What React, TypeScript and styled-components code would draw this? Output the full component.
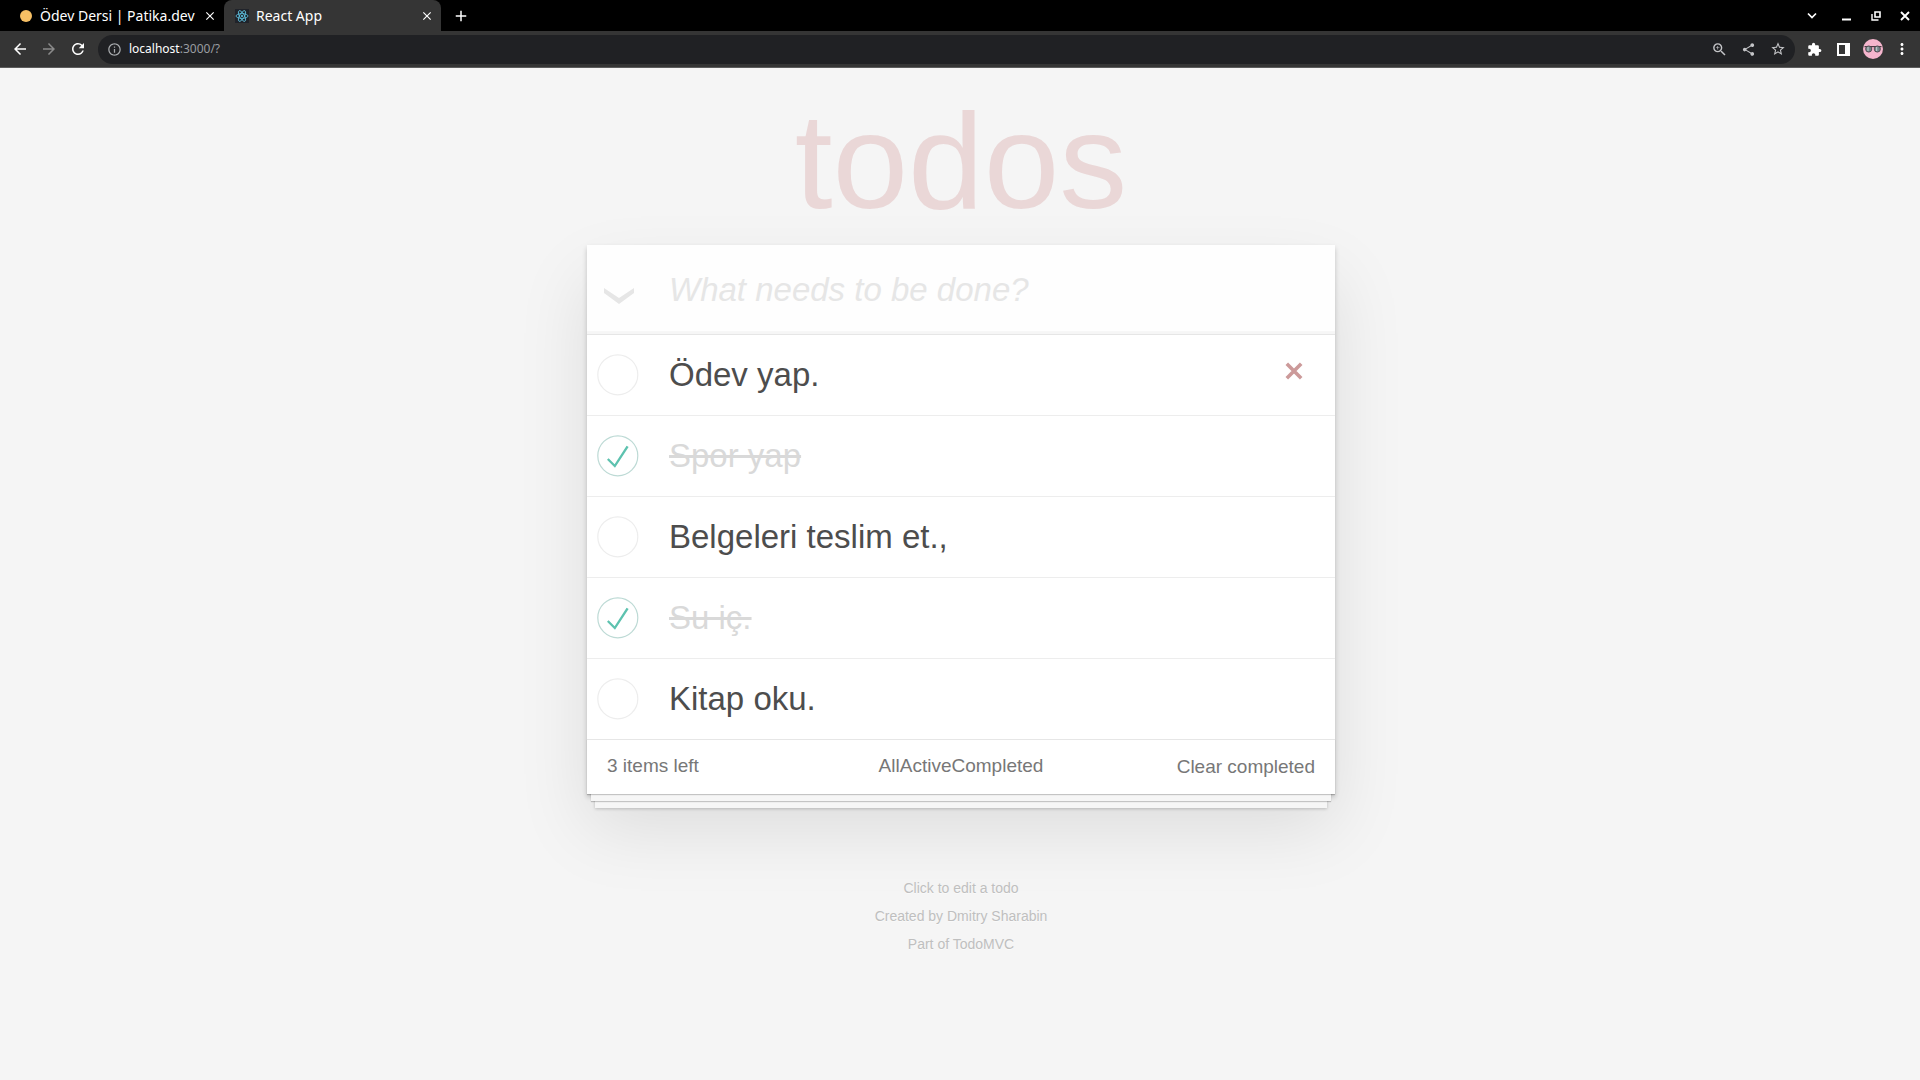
import React, { useState } from "react";
import styled, { createGlobalStyle } from "styled-components";
import {
  MdAdd,
  MdArrowBack,
  MdArrowForward,
  MdClose,
  MdExtension,
  MdInfoOutline,
  MdMoreVert,
  MdRefresh,
  MdShare,
  MdStarBorder,
  MdZoomIn,
} from "react-icons/md";

const GlobalStyle = createGlobalStyle`
  *, *::before, *::after { box-sizing: border-box; }
  body {
    margin: 0;
    background: #f5f5f5;
    color: #4d4d4d;
    font-family: "Liberation Sans", Arial, sans-serif;
  }
  button, input { font: inherit; color: inherit; }
  button { padding: 0; border: 0; background: none; cursor: pointer; }
  a { color: inherit; text-decoration: none; }
`;

/* ---------- browser frame ---------- */

const Browser = styled.header`
  font-family: "Noto Sans", sans-serif;
  color: #fff;
  border-bottom: 1px solid #5c5c5c;
`;

const TabStrip = styled.nav`
  display: flex;
  height: 31px;
  padding: 0 1px 0 8px;
  background: #000;
`;

const Tab = styled.div<{ $active?: boolean }>`
  display: flex;
  align-items: center;
  gap: 7px;
  width: ${(p) => (p.$active ? 217 : 216)}px;
  padding: 0 7px 0 11px;
  border-radius: 8px 8px 0 0;
  background: ${(p) => (p.$active ? "#353535" : "transparent")};
  font-size: 14px;
  line-height: 20px;
`;

const TabTitle = styled.a`
  flex: 1;
  white-space: nowrap;
`;

const Favicon = styled.svg`
  width: 14px;
  height: 14px;
`;

const IconButton = styled.button<{ $size?: number; $dim?: boolean }>`
  display: grid;
  place-items: center;
  width: 29px;
  height: 100%;
  color: ${(p) => (p.$dim ? "#8a8a8a" : "#fff")};
  svg {
    width: ${(p) => p.$size ?? 18}px;
    height: ${(p) => p.$size ?? 18}px;
  }
`;

const TabClose = styled(IconButton)`
  width: 14px;
`;

const NewTab = styled(IconButton)`
  width: 40px;
`;

const WindowControls = styled.div`
  display: flex;
  margin-left: auto;
`;

const TabSearch = styled(IconButton)`
  margin-right: 6px;
`;

const Toolbar = styled.div`
  display: flex;
  align-items: center;
  height: 36px;
  padding: 0 4px 0 5px;
  background: #353535;
`;

const ToolGroup = styled.div`
  display: flex;
  height: 29px;
`;

const AddressBar = styled.div`
  display: flex;
  flex: 1;
  align-items: center;
  height: 29px;
  margin: 0 5px 0 6px;
  padding: 0 3px 0 2px;
  border-radius: 15px;
  background: #202124;
`;

const Address = styled.button`
  flex: 1;
  color: #9a9da1;
  font-size: 12px;
  line-height: 20px;
  text-align: left;
  cursor: text;
`;

const Host = styled.span`
  color: #fff;
`;

const PageIcon = styled(IconButton)`
  color: #a8abae;
`;

const BarIcon = styled(IconButton)`
  color: #c4c5c8;
`;

/* ---------- todo page ---------- */

const Page = styled.div`
  display: flex;
  flex-direction: column;
  align-items: center;
  padding: 0 24px 60px 26px;
`;

const Title = styled.h1`
  margin: 17px 0 8px;
  color: rgba(175, 47, 47, 0.15);
  font-size: 136px;
  font-weight: 400;
  line-height: 152px;
`;

const Card = styled.section`
  width: 100%;
  max-width: 748px;
  background: #fff;
  box-shadow: 0 3px 5px rgba(0, 0, 0, 0.2), 0 34px 68px rgba(0, 0, 0, 0.1);
`;

const NewTodo = styled.form`
  display: flex;
  height: 89px;
  background: #fefefe;
  box-shadow: inset 0 -3px 1px rgba(0, 0, 0, 0.03);
`;

const ToggleAll = styled.button`
  display: grid;
  place-items: center;
  width: 64px;
  padding: 12px 0 0;
  svg {
    width: 30px;
    height: 16px;
    fill: #e6e6e6;
  }
`;

const NewTodoInput = styled.input`
  flex: 1;
  min-width: 0;
  padding: 0 20px 0 18px;
  border: 0;
  outline: 0;
  background: none;
  font-size: 33px;
  &::placeholder {
    color: #e6e6e6;
    font-style: italic;
    opacity: 1;
  }
`;

const List = styled.ul`
  margin: 0;
  padding: 0;
  border-top: 1px solid #e6e6e6;
  list-style: none;
`;

const Row = styled.li`
  display: flex;
  align-items: center;
  min-height: 80px;
  & + & {
    border-top: 1px solid #ededed;
    min-height: 81px;
  }
`;

const Toggle = styled.span`
  display: grid;
  place-items: center;
  width: 42px;
  height: 42px;
  margin: 0 30px 0 10px;
  > * {
    grid-area: 1 / 1;
    width: 42px;
    height: 42px;
    margin: 0;
  }
  input {
    appearance: none;
    cursor: pointer;
  }
  svg {
    pointer-events: none;
  }
`;

const TodoLabel = styled.label<{ $done: boolean }>`
  flex: 1;
  padding: 20px 0;
  color: ${(p) => (p.$done ? "#d9d9d9" : "#4d4d4d")};
  font-size: 33px;
  line-height: 40px;
  text-decoration: ${(p) => (p.$done ? "line-through" : "none")};
`;

const Destroy = styled.button`
  display: grid;
  place-items: center;
  width: 54px;
  height: 54px;
  margin-right: 14px;
  padding-bottom: 8px;
  color: #cc9a9a;
  svg {
    width: 18px;
    height: 18px;
  }
`;

const CardFooter = styled.footer`
  display: grid;
  grid-template-columns: 1fr auto 1fr;
  height: 55px;
  padding: 13px 20px;
  border-top: 1px solid #e6e6e6;
  color: #777;
  font-size: 19px;
  line-height: 26px;
  box-shadow: 0 1px 1px rgba(0, 0, 0, 0.2), 0 11px 0 -4px #f6f6f6,
    0 12px 1px -4px rgba(0, 0, 0, 0.2), 0 22px 0 -8px #f6f6f6,
    0 23px 3px -8px rgba(0, 0, 0, 0.2);
`;

const ClearButton = styled.button`
  justify-self: end;
`;

const Info = styled.footer`
  margin-top: 86px;
  color: #bfbfbf;
  font-size: 14px;
  line-height: 16px;
  text-align: center;
  text-shadow: 0 1px 0 rgba(255, 255, 255, 0.5);
  p {
    margin: 0 0 12px;
  }
`;

const ReactMark = () => (
  <Favicon viewBox="0 0 14 14" aria-hidden="true">
    <rect width="14" height="14" fill="#20232a" />
    <g fill="none" stroke="#61c8e6" strokeWidth="0.8">
      <ellipse cx="7" cy="7" rx="6" ry="2.4" />
      <ellipse cx="7" cy="7" rx="6" ry="2.4" transform="rotate(60 7 7)" />
      <ellipse cx="7" cy="7" rx="6" ry="2.4" transform="rotate(120 7 7)" />
    </g>
    <circle cx="7" cy="7" r="1.1" fill="#61c8e6" />
  </Favicon>
);

const DotMark = () => (
  <Favicon viewBox="0 0 14 14" aria-hidden="true">
    <circle cx="7" cy="7" r="6" fill="#f7c065" />
  </Favicon>
);

const Avatar = () => (
  <svg viewBox="0 0 20 20" aria-hidden="true">
    <circle cx="10" cy="10" r="10" fill="#f5b5cd" />
    <path d="M1.5 7.6h17" stroke="#4a3c44" strokeWidth="1.2" />
    <circle cx="5.7" cy="10" r="3.1" fill="#75848a" stroke="#4a3c44" strokeWidth="0.8" />
    <circle cx="14.3" cy="10" r="3.1" fill="#75848a" stroke="#4a3c44" strokeWidth="0.8" />
    <path d="M5 8v4M13.6 8v4" stroke="#b9c5c6" strokeWidth="1.2" />
  </svg>
);

function BrowserFrame() {
  return (
    <Browser>
      <TabStrip aria-label="Tabs">
        <Tab>
          <DotMark />
          <TabTitle href="#patika">Ödev Dersi | Patika.dev</TabTitle>
          <TabClose $size={14} aria-label="Close tab"><MdClose /></TabClose>
        </Tab>
        <Tab $active>
          <ReactMark />
          <TabTitle href="#app">React App</TabTitle>
          <TabClose $size={14} aria-label="Close tab"><MdClose /></TabClose>
        </Tab>
        <NewTab $size={18} aria-label="New tab"><MdAdd /></NewTab>
        <WindowControls>
          <TabSearch $size={10} aria-label="Search tabs">
            <svg viewBox="0 0 10 10" fill="none" stroke="currentColor" strokeWidth="1.7">
              <path d="M1 2.5l4 4 4-4" />
            </svg>
          </TabSearch>
          <IconButton $size={10} aria-label="Minimize">
            <svg viewBox="0 0 10 10" fill="currentColor"><path d="M0 7.500h9v2H0z" /></svg>
          </IconButton>
          <IconButton $size={10} aria-label="Restore">
            <svg viewBox="0 0 10 10" fill="none" stroke="currentColor">
              <path d="M4 1h5v5H4z" strokeWidth="1.6" />
              <path d="M1 3v6h6.5" strokeWidth="1.4" />
            </svg>
          </IconButton>
          <IconButton $size={10} aria-label="Close window">
            <svg viewBox="0 0 10 10" stroke="currentColor" strokeWidth="1.9">
              <path d="M1 1l8 8M9 1L1 9" />
            </svg>
          </IconButton>
        </WindowControls>
      </TabStrip>
      <Toolbar>
        <ToolGroup>
          <IconButton aria-label="Back"><MdArrowBack /></IconButton>
          <IconButton $dim aria-label="Forward"><MdArrowForward /></IconButton>
          <IconButton aria-label="Reload"><MdRefresh /></IconButton>
        </ToolGroup>
        <AddressBar>
          <PageIcon $size={15} aria-label="Site information"><MdInfoOutline /></PageIcon>
          <Address><Host>localhost</Host>:3000/?</Address>
          <BarIcon $size={17} aria-label="Zoom"><MdZoomIn /></BarIcon>
          <BarIcon $size={15} aria-label="Share"><MdShare /></BarIcon>
          <BarIcon $size={16} aria-label="Bookmark"><MdStarBorder /></BarIcon>
        </AddressBar>
        <ToolGroup>
          <IconButton $size={15} aria-label="Extensions"><MdExtension /></IconButton>
          <IconButton $size={13} aria-label="Side panel">
            <svg viewBox="0 0 13 13" fill="currentColor" fillRule="evenodd">
              <path d="M0 0h13v13H0zM2 2v9h6V2z" />
            </svg>
          </IconButton>
          <IconButton $size={20} aria-label="Profile"><Avatar /></IconButton>
          <IconButton aria-label="Menu"><MdMoreVert /></IconButton>
        </ToolGroup>
      </Toolbar>
    </Browser>
  );
}

type Todo = { id: number; text: string; done: boolean };

const initialTodos: Todo[] = [
  { id: 1, text: "Ödev yap.", done: false },
  { id: 2, text: "Spor yap", done: true },
  { id: 3, text: "Belgeleri teslim et.,", done: false },
  { id: 4, text: "Su iç.", done: true },
  { id: 5, text: "Kitap oku.", done: false },
];

export default function App() {
  const [todos, setTodos] = useState(initialTodos);
  const [draft, setDraft] = useState("");
  const [filter, setFilter] = useState("All");
  const [hovered, setHovered] = useState(1);

  const left = todos.filter((t) => !t.done).length;
  const shown = todos.filter(
    (t) => filter === "All" || t.done === (filter === "Completed")
  );

  const addTodo = (e: React.FormEvent) => {
    e.preventDefault();
    if (!draft.trim()) return;
    setTodos([...todos, { id: Date.now(), text: draft.trim(), done: false }]);
    setDraft("");
  };

  return (
    <>
      <GlobalStyle />
      <BrowserFrame />
      <Page>
        <Title>todos</Title>
        <Card>
          <NewTodo onSubmit={addTodo}>
            <ToggleAll
              type="button"
              aria-label="Mark all as complete"
              onClick={() => setTodos(todos.map((t) => ({ ...t, done: left > 0 })))}
            >
              <svg viewBox="0 0 30 16"><path d="M0 0l15 10L30 0v5L15 16 0 5z" /></svg>
            </ToggleAll>
            <NewTodoInput
              aria-label="New todo"
              placeholder="What needs to be done?"
              value={draft}
              onChange={(e) => setDraft(e.target.value)}
            />
          </NewTodo>
          <List>
            {shown.map((t) => (
              <Row key={t.id} onMouseEnter={() => setHovered(t.id)}>
                <Toggle>
                  <input
                    id={`todo-${t.id}`}
                    type="checkbox"
                    checked={t.done}
                    onChange={() =>
                      setTodos(todos.map((o) => (o.id === t.id ? { ...o, done: !o.done } : o)))
                    }
                  />
                  <svg viewBox="-2 -2 105 105" fill="none" aria-hidden="true">
                    <circle cx="50" cy="50" r="50" stroke={t.done ? "#bddad5" : "#ededed"} strokeWidth="3" />
                    {t.done && <path fill="#5dc2af" d="M72 25L42 71 27 56l-4 4 20 20 34-52z" />}
                  </svg>
                </Toggle>
                <TodoLabel htmlFor={`todo-${t.id}`} $done={t.done}>{t.text}</TodoLabel>
                {hovered === t.id && (
                  <Destroy
                    aria-label="Delete todo"
                    onClick={() => setTodos(todos.filter((o) => o.id !== t.id))}
                  >
                    <svg viewBox="0 0 18 18" stroke="currentColor" strokeWidth="3.6">
                      <path d="M1.800 1.800l14.400 14.400M16.200 1.800L1.800 16.200" />
                    </svg>
                  </Destroy>
                )}
              </Row>
            ))}
          </List>
          <CardFooter>
            <span>{left} items left</span>
            <nav aria-label="Filter">
              {["All", "Active", "Completed"].map((f) => (
                <a key={f} href={`#${f.toLowerCase()}`} onClick={() => setFilter(f)}>{f}</a>
              ))}
            </nav>
            <ClearButton onClick={() => setTodos(todos.filter((t) => !t.done))}>
              Clear completed
            </ClearButton>
          </CardFooter>
        </Card>
        <Info>
          <p>Click to edit a todo</p>
          <p>Created by <a href="#author">Dmitry Sharabin</a></p>
          <p>Part of <a href="#todomvc">TodoMVC</a></p>
        </Info>
      </Page>
    </>
  );
}
